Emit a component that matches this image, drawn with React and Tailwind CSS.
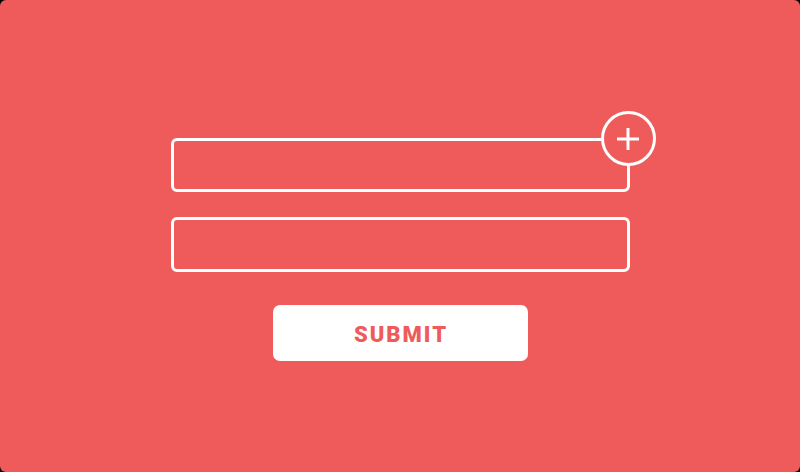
import React from 'react';

export default function App() {
  return (
    <div className="w-[800px] h-[472px] bg-black">
      <div
        className="w-full h-full rounded-[6px] bg-[#ef5b5b] flex flex-col items-center pt-[138px]"
        style={{ fontFamily: 'Roboto, "Liberation Sans", sans-serif' }}
      >
        {/* first field with add button */}
        <div className="relative w-[459px] h-[54px]">
          <div className="w-full h-full rounded-[6px] border-[3px] border-white" />
          <div className="absolute right-[-26px] top-[-27px] w-[55px] h-[55px] rounded-full border-[3px] border-white bg-[#ef5b5b] flex items-center justify-center">
            <svg width="24" height="24" viewBox="0 0 24 24" fill="none" stroke="white" strokeWidth="3">
              <path d="M12 1v22M1 12h22" />
            </svg>
          </div>
        </div>

        <div className="mt-[25px] w-[459px] h-[55px] rounded-[6px] border-[3px] border-white" />

        <button className="mt-[33px] w-[255px] h-[56px] rounded-[7px] bg-white text-[#ef5b5b] font-black text-[22px] tracking-[2px] pl-[2px] pt-[2px] flex items-center justify-center">
          SUBMIT
        </button>
      </div>
    </div>
  );
}
